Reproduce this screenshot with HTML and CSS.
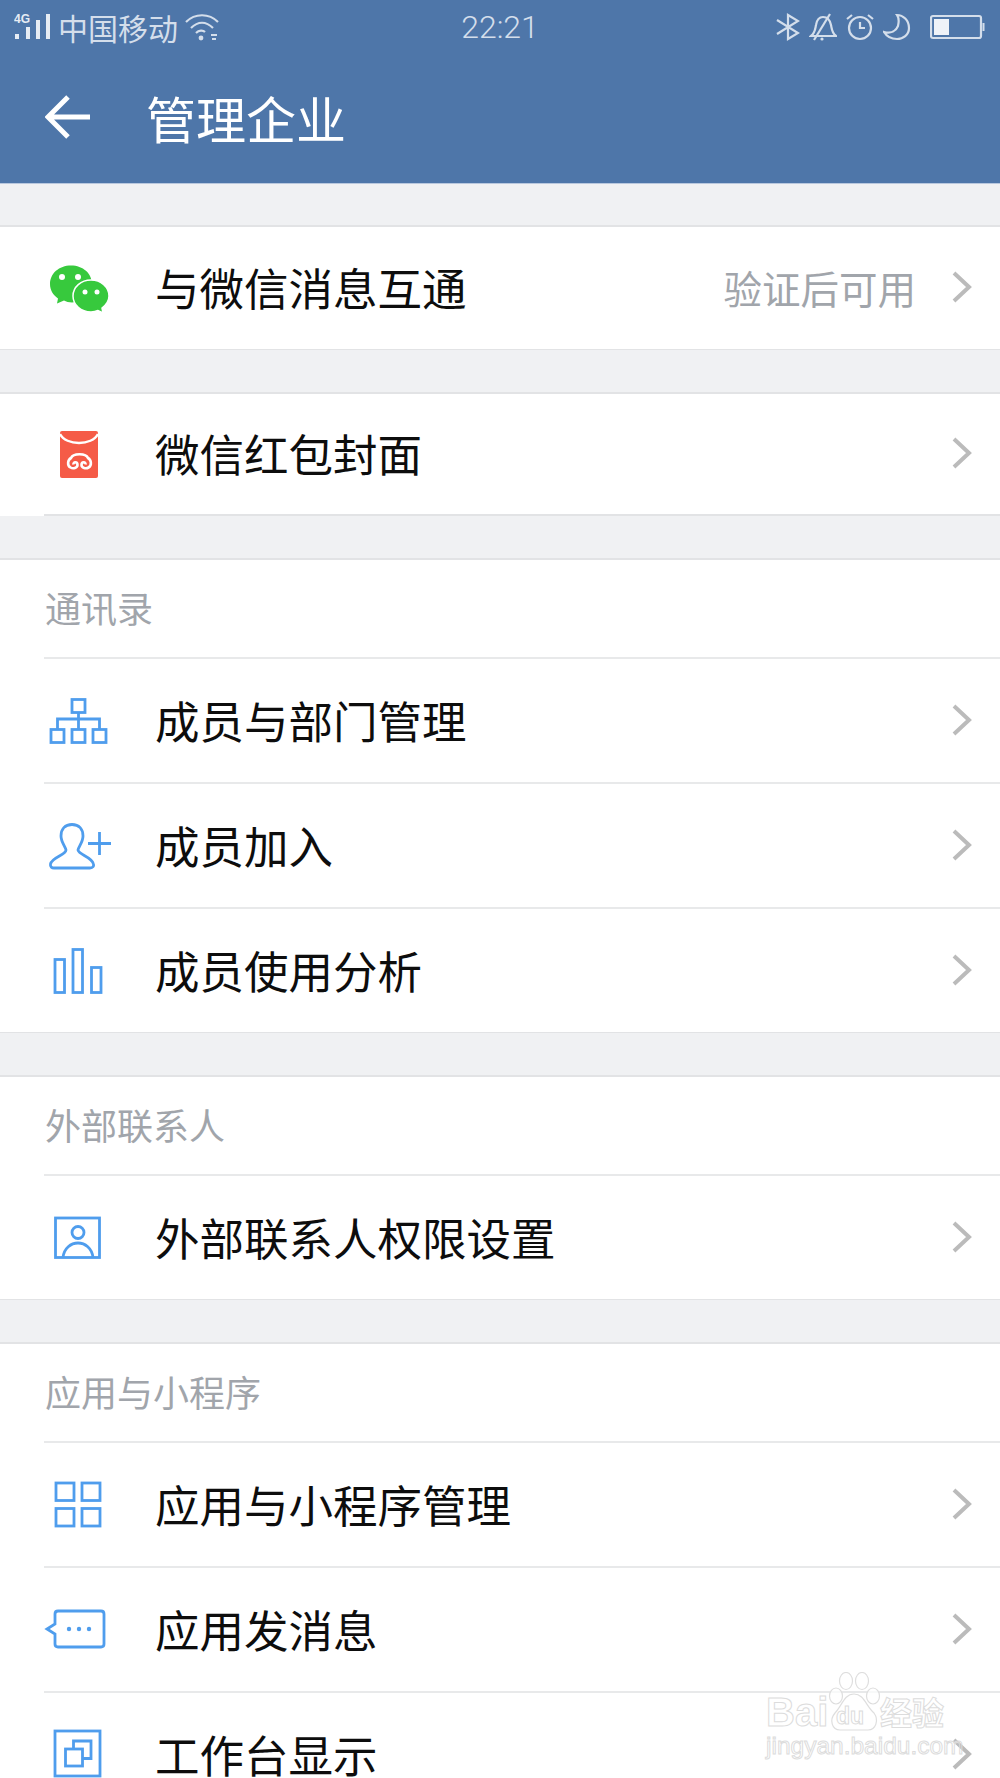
FILE: index.html
```html
<!DOCTYPE html>
<html lang="zh-CN">
<head>
<meta charset="utf-8">
<title>管理企业</title>
<link rel="stylesheet" href="styles.css">
</head>
<body>
<div class="page">
  <header class="appbar">
    <div class="status">
      <div class="status-left">
        <svg class="st-signal" viewBox="0 0 38 28" width="38" height="28"><text x="0" y="10" class="st-4g">4G</text><rect x="1" y="21" width="4" height="5"/><rect x="12" y="14" width="4" height="12"/><rect x="22" y="7" width="4" height="19"/><rect x="32" y="1" width="4" height="25"/></svg>
        <span class="carrier">中国移动</span>
        <svg class="st-wifi" viewBox="0 0 36 28" width="36" height="28" fill="none"><path d="M2 9C11 0 25 0 34 9"/><path d="M7 15C14 8 22 8 29 15"/><path d="M12 20C15 17 19 17 21 19"/><circle cx="17" cy="25" r="2.4" class="st-fill"/><path d="M27 22H33M28 26H32"/></svg>
      </div>
      <div class="time">22:21</div>
      <div class="status-right">
        <svg viewBox="0 0 24 28" width="24" height="28" fill="none"><path d="M1 7L22 20L12 26V2L22 8L1 21"/></svg>
        <svg viewBox="0 0 28 28" width="28" height="28" fill="none"><path d="M2 23C6 20 6 17 7 12C8 6 11 4 14 4C18 4 21 7 22 12C23 17 23 20 27 23Z"/><path d="M21 1L5 27"/><circle cx="13" cy="26" r="1.6" class="st-fill"/></svg>
        <svg viewBox="0 0 28 28" width="28" height="28" fill="none"><circle cx="14" cy="15" r="11"/><path d="M14 9V15H19M1 6L6 2M22 2L27 6"/></svg>
        <svg viewBox="0 0 28 28" width="28" height="28" fill="none"><path d="M14 2C20 2 26 7 26 15C26 22 20 26 14 26C8 26 4 24 1 19C8 21 13 18 15 13C16 9 16 5 14 2Z"/></svg>
        <svg class="st-batt" viewBox="0 0 56 26" width="56" height="26" fill="none"><rect x="1" y="2" width="50" height="22" rx="2"/><rect x="4" y="5" width="15" height="16" class="st-level"/><rect x="52.5" y="9" width="2" height="8" class="st-fill"/></svg>
      </div>
    </div>
    <div class="toolbar">
      <svg class="back" viewBox="0 0 46 46" width="46" height="46" fill="none"><path d="M45 23H4M23 3L3 23L23 43"/></svg>
      <h1 class="title">管理企业</h1>
    </div>
  </header>

  <section class="card first">
    <div class="row">
      <svg class="icon" viewBox="0 0 70 70"><path class="green" d="M27 12.500C15 12.500 6 20.500 6 31C6 37 9 42 14 45.500L13 50.500L20 47.500C22 48.500 25 49.500 28 49.500C40 49.500 48 41 48 31C48 20.500 39 12.500 27 12.500Z"/><circle cx="18" cy="24" r="3" class="dot"/><circle cx="34" cy="24" r="3" class="dot"/><path class="green outline" d="M47 27C37 27 29 34 29 43C29 52 37 59 47 59C50 59 52 58.500 54 57.500L59 60L58 55C62 52 65 48 65 43C65 34 57 27 47 27Z"/><circle cx="41" cy="39" r="2.500" class="dot"/><circle cx="53" cy="39" r="2.500" class="dot"/></svg>
      <div class="row-body">
        <span class="name">与微信消息互通</span>
        <span class="value">验证后可用</span>
        <svg class="chev" viewBox="0 0 20 32" width="20" height="32" fill="none"><path d="M2 2L17 16L2 30"/></svg>
      </div>
    </div>
  </section>

  <section class="card open-bottom">
    <div class="row">
      <svg class="icon" viewBox="0 0 70 70"><rect x="16" y="11" width="38" height="47" rx="2" class="red"/><path d="M16 14C22 26 48 26 54 14" class="white-line"/><path d="M29.500 44.500C29 41.500 33.500 41.500 33.500 45C33.500 48 29 49 26.500 47.500C23 45.500 23.500 40 27 38C29 33 42 33 44 38C47.500 40 48 45.500 44.500 47.500C42 49 37.500 48 37.500 45C37.500 41.500 42 41.500 41.500 44.500" class="white-swirl"/></svg>
      <div class="row-body">
        <span class="name">微信红包封面</span>
        <svg class="chev" viewBox="0 0 20 32" width="20" height="32" fill="none"><path d="M2 2L17 16L2 30"/></svg>
      </div>
    </div>
  </section>

  <section class="card">
    <div class="label"><span>通讯录</span></div>
    <div class="row">
      <svg class="icon blue" viewBox="0 0 70 70"><rect x="28" y="14.500" width="13" height="13"/><rect x="7" y="44.500" width="13" height="13"/><rect x="28" y="44.500" width="13" height="13"/><rect x="49" y="44.500" width="13" height="13"/><path d="M34.500 27.500V44.500M13.500 44.500V34H55.500V44.500"/></svg>
      <div class="row-body">
        <span class="name">成员与部门管理</span>
        <svg class="chev" viewBox="0 0 20 32" width="20" height="32" fill="none"><path d="M2 2L17 16L2 30"/></svg>
      </div>
    </div>
    <div class="row">
      <svg class="icon blue" viewBox="0 0 70 70"><path d="M28 14.500C21 14.500 17 19 17 26C17 32 21 36 22 40C22 45 8 47 6.500 54C6 57 8 58 10 58H46C49 58 50 56 49.500 54C48 47 35 45 34 40C35 36 39 32 39 26C39 19 35 14.500 28 14.500Z"/><path d="M44 33.500H67M55.500 22V45"/></svg>
      <div class="row-body">
        <span class="name">成员加入</span>
        <svg class="chev" viewBox="0 0 20 32" width="20" height="32" fill="none"><path d="M2 2L17 16L2 30"/></svg>
      </div>
    </div>
    <div class="row">
      <svg class="icon blue" viewBox="0 0 70 70"><rect x="11" y="24.500" width="9.500" height="33"/><rect x="29" y="14.500" width="9.500" height="43"/><rect x="47.500" y="32.500" width="9.500" height="25"/></svg>
      <div class="row-body">
        <span class="name">成员使用分析</span>
        <svg class="chev" viewBox="0 0 20 32" width="20" height="32" fill="none"><path d="M2 2L17 16L2 30"/></svg>
      </div>
    </div>
  </section>

  <section class="card">
    <div class="label"><span>外部联系人</span></div>
    <div class="row">
      <svg class="icon blue" viewBox="0 0 70 70"><rect x="11.500" y="16" width="44" height="39.500"/><circle cx="34" cy="30.500" r="6"/><path d="M19 55.500C20 46 27 41 34 41C41 41 48 46 49 55.500"/></svg>
      <div class="row-body">
        <span class="name">外部联系人权限设置</span>
        <svg class="chev" viewBox="0 0 20 32" width="20" height="32" fill="none"><path d="M2 2L17 16L2 30"/></svg>
      </div>
    </div>
  </section>

  <section class="card">
    <div class="label"><span>应用与小程序</span></div>
    <div class="row">
      <svg class="icon blue" viewBox="0 0 70 70"><rect x="12" y="14" width="18" height="17.500"/><rect x="38" y="14" width="18" height="17.500"/><rect x="12" y="39.500" width="18" height="17.500"/><rect x="38" y="39.500" width="18" height="17.500"/></svg>
      <div class="row-body">
        <span class="name">应用与小程序管理</span>
        <svg class="chev" viewBox="0 0 20 32" width="20" height="32" fill="none"><path d="M2 2L17 16L2 30"/></svg>
      </div>
    </div>
    <div class="row">
      <svg class="icon blue" viewBox="0 0 70 70"><path d="M14 17H57C59 17 60 18 60 20V50C60 52 59 53 57 53H14C12 53 11 52 11 50V40L3 35L11 30V20C11 18 12 17 14 17Z"/><circle cx="25" cy="35" r="2.200" class="blue-dot"/><circle cx="35" cy="35" r="2.200" class="blue-dot"/><circle cx="45" cy="35" r="2.200" class="blue-dot"/></svg>
      <div class="row-body">
        <span class="name">应用发消息</span>
        <svg class="chev" viewBox="0 0 20 32" width="20" height="32" fill="none"><path d="M2 2L17 16L2 30"/></svg>
      </div>
    </div>
    <div class="row">
      <svg class="icon blue" viewBox="0 0 70 70"><rect x="11" y="12" width="45" height="45"/><rect x="21.500" y="30" width="17" height="17"/><path d="M29.500 30V22H47V39.500H38.500"/></svg>
      <div class="row-body">
        <span class="name">工作台显示</span>
        <svg class="chev" viewBox="0 0 20 32" width="20" height="32" fill="none"><path d="M2 2L17 16L2 30"/></svg>
      </div>
    </div>
  </section>

  <div class="watermark">
    <svg class="wm-paw" viewBox="0 0 56 60" width="56" height="60"><ellipse cx="10" cy="24" rx="6.500" ry="8"/><ellipse cx="20" cy="9" rx="6.500" ry="8.500"/><ellipse cx="36" cy="9" rx="6.500" ry="8.500"/><ellipse cx="47" cy="24" rx="6.500" ry="8"/><path d="M28 22C38 22 40 34 48 41C53 48 50 58 42 58H14C6 58 3 48 9 41C16 34 18 22 28 22Z"/></svg>
    <span class="wm-bai">Bai</span>
    <span class="wm-du">du</span>
    <span class="wm-cn">经验</span>
    <span class="wm-url">jingyan.baidu.com</span>
  </div>
</div>
</body>
</html>
```
FILE: styles.css
```css
* { box-sizing: border-box; }
html, body { margin: 0; padding: 0; }
body {
  width: 1000px;
  height: 1778px;
  overflow: hidden;
  background: #f0f1f3;
  font-family: "Noto Sans CJK SC", "Noto Sans", sans-serif;
}
.page { position: relative; height: 1778px; overflow: hidden; }

.appbar { height: 184px; background: #4e76a9; border-bottom: 1px solid #b9c8de; }
.status {
  height: 54px;
  display: grid;
  grid-template-columns: 1fr auto 1fr;
  align-items: center;
  color: #d4deeb;
  padding: 0 14px 0 14px;
}
.status svg { stroke: #d4deeb; stroke-width: 2.2; display: block; }
.status .st-fill { fill: #d4deeb; stroke: none; }
.status .st-level { fill: #eef2f8; stroke: none; }
.status-left { display: flex; align-items: center; }
.st-signal rect { fill: #e6ecf4; stroke: none; }
.st-4g { font: bold 12px "Liberation Sans", sans-serif; fill: #e6ecf4; stroke: none; }
.carrier { font-size: 30px; line-height: 40px; margin-left: 6px; margin-right: 6px; font-weight: 400; }
.time { font-family: Roboto, sans-serif; font-size: 32px; font-weight: 300; line-height: 40px; }
.status-right { display: flex; align-items: center; justify-content: flex-end; gap: 9px; }
.st-batt { margin-left: 10px; }

.toolbar { height: 129px; display: flex; align-items: center; padding-left: 45px; padding-bottom: 3px; }
.back { stroke: #fff; stroke-width: 5; }
.title { margin: 0 0 0 55px; font-size: 50px; font-weight: 400; color: #fff; line-height: 60px; }

.card {
  background: #fff;
  border-top: 2px solid #e2e3e5;
  border-bottom: 1px solid #e2e3e5;
  margin-top: 42px;
}
.card.first { margin-top: 41px; }
.card.open-bottom { border-bottom: 0; }
.card.open-bottom .row-body { border-bottom: 2px solid #e2e3e5; }
.first .row, .open-bottom .row { height: 122px; }

.label {
  height: 97px;
  margin-left: 45px;
  padding-bottom: 4px;
  display: flex;
  align-items: center;
  font-size: 36px;
  color: #a1a5ab;
  font-weight: 400;
}
.row { display: flex; align-items: stretch; height: 125px; position: relative; }
.row .icon { width: 70px; height: 70px; position: absolute; left: 44px; top: 50%; margin-top: -35px; }
.row-body {
  flex: 1;
  margin-left: 44px;
  padding-left: 111px;
  padding-right: 28px;
  padding-bottom: 2px;
  display: flex;
  align-items: center;
}
.label + .row .row-body { border-top: 2px solid #e8e9ea; }
.row + .row .row-body { border-top: 2px solid #e8e9ea; }
.name { margin-right: auto; font-size: 44.5px; font-weight: 400; color: #0d0d0d; line-height: 60px; }
.value { font-size: 38.5px; font-weight: 400; color: #a1a5ab; margin-right: 36px; }
.chev { stroke: #bbbbbb; stroke-width: 4; display: block; }

.blue { fill: none; stroke: #4f9ded; stroke-width: 2.8; }
.blue-dot { fill: #4f9ded; stroke: none; }
.green { fill: #37c93d; }
.outline { stroke: #fff; stroke-width: 1.5; }
.dot { fill: #fff; }
.red { fill: #f55b47; }
.white-line { fill: none; stroke: #fff; stroke-width: 2.4; }
.white-swirl { fill: none; stroke: #fff; stroke-width: 2.6; }

.watermark { position: absolute; left: 766px; top: 1672px; width: 184px; height: 92px; color: transparent; }
.watermark span { position: absolute; -webkit-text-stroke: 1px #dcdcdc; white-space: nowrap; }
.wm-paw { position: absolute; left: 60px; top: 0; fill: rgba(255,255,255,.7); stroke: #dedede; stroke-width: 1.2; }
.wm-bai { left: 0; top: 22px; font: bold 40px/36px "Liberation Sans", sans-serif; }
.wm-du { left: 70px; top: 32px; font: bold 23px/24px "Liberation Sans", sans-serif; }
.wm-cn { left: 114px; top: 21px; font-size: 32px; line-height: 36px; font-weight: 700; }
.wm-url { left: 0; top: 60px; font: 24.500px/28px "Liberation Sans", sans-serif; }
```
